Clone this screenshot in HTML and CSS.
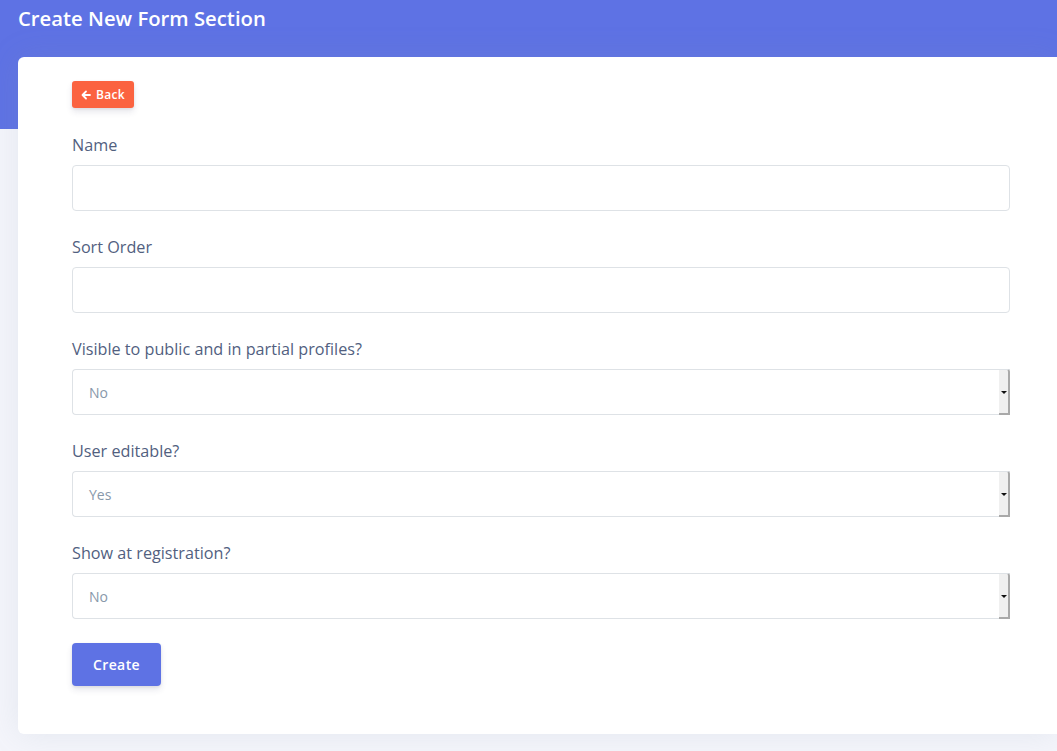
FILE: index.html
```html
<!DOCTYPE html>
<html>
<head>
<meta charset="utf-8">
<link rel="stylesheet" href="styles.css">
</head>
<body>
<div class="header">
  <h1 class="title">Create New Form Section</h1>
</div>
<div class="card">
  <a class="btn-back"><svg class="arrow" width="10" height="10" viewBox="0 0 10 10"><path d="M9 5H2M5 1.5L1.5 5 5 8.5" fill="none" stroke="#fff" stroke-width="1.8" stroke-linecap="round" stroke-linejoin="round"/></svg>Back</a>
  <div class="group">
    <label class="label">Name</label>
    <div class="input"></div>
  </div>
  <div class="group">
    <label class="label">Sort Order</label>
    <div class="input"></div>
  </div>
  <div class="group">
    <label class="label">Visible to public and in partial profiles?</label>
    <div class="input select"><span class="value">No</span><span class="spin"><span class="tri"></span></span></div>
  </div>
  <div class="group">
    <label class="label">User editable?</label>
    <div class="input select"><span class="value">Yes</span><span class="spin"><span class="tri"></span></span></div>
  </div>
  <div class="group">
    <label class="label">Show at registration?</label>
    <div class="input select"><span class="value">No</span><span class="spin"><span class="tri"></span></span></div>
  </div>
  <a class="btn-create">Create</a>
</div>
</body>
</html>
```
FILE: styles.css
```css
html, body {
  margin: 0;
  padding: 0;
}
body {
  background: #f4f5fb;
  font-family: "Open Sans", "Liberation Sans", sans-serif;
  overflow: hidden;
  height: 751px;
}
.header {
  background: #5e72e4;
  height: 129px;
  padding: 0 18px;
  box-sizing: border-box;
}
.title {
  margin: 0;
  padding-top: 5px;
  color: #fff;
  font-size: 20.3px;
  font-weight: 600;
  line-height: 27px;
}
.card {
  position: relative;
  margin: -72px 0 0 18px;
  width: calc(100% - 18px);
  background: #fff;
  border-radius: 6px 0 0 6px;
  box-shadow: 0 0 32px rgba(136, 152, 170, 0.15);
  padding: 24px 0 48px 54px;
  box-sizing: border-box;
  height: 677px;
}
.btn-back {
  display: inline-flex;
  align-items: center;
  gap: 5px;
  height: 27px;
  width: 62px;
  box-sizing: border-box;
  padding: 0 0 0 9px;
  background: #fb6340;
  color: #fff;
  font-size: 12px;
  font-weight: 600;
  border-radius: 3px;
  box-shadow: 0 4px 6px rgba(50, 50, 93, 0.11), 0 1px 3px rgba(0, 0, 0, 0.08);
  margin-bottom: 26px;
  letter-spacing: 0.3px;
}
.group {
  display: flex;
  flex-direction: column;
  width: 938px;
  margin-bottom: 25px;
}
.label {
  color: #525f7f;
  font-size: 16.2px;
  line-height: 24px;
  margin-bottom: 8px;
  margin-top: -1px;
}
.input {
  height: 46px;
  box-sizing: border-box;
  border: 1px solid #dee2e6;
  border-radius: 4px;
  background: #fff;
  display: flex;
  align-items: center;
}
.select {
  position: relative;
  border-right: none;
  border-radius: 4px 0 0 4px;
}
.value {
  padding-left: 16px;
  color: #8898aa;
  font-size: 14px;
  flex: 1;
}
.spin {
  align-self: stretch;
  width: 9px;
  margin: -1px 0 -1px 0;
  background: #f0f0f0;
  border-right: 2px solid #a9a9a9;
  border-bottom: 2px solid #a9a9a9;
  border-top: 1px solid #dee2e6;
  border-radius: 0 3px 0 0;
  display: flex;
  align-items: center;
  justify-content: center;
}
.tri {
  width: 0;
  height: 0;
  border-left: 3px solid transparent;
  border-right: 3px solid transparent;
  border-top: 3px solid #111;
  margin-top: 2px;
}
.btn-create {
  display: inline-flex;
  align-items: center;
  justify-content: center;
  width: 89px;
  height: 43px;
  margin-top: -1px;
  background: #5e72e4;
  color: #fff;
  font-size: 14px;
  font-weight: 600;
  border-radius: 4px;
  letter-spacing: 0.4px;
  box-shadow: 0 4px 6px rgba(50, 50, 93, 0.11), 0 1px 3px rgba(0, 0, 0, 0.08);
}
```
